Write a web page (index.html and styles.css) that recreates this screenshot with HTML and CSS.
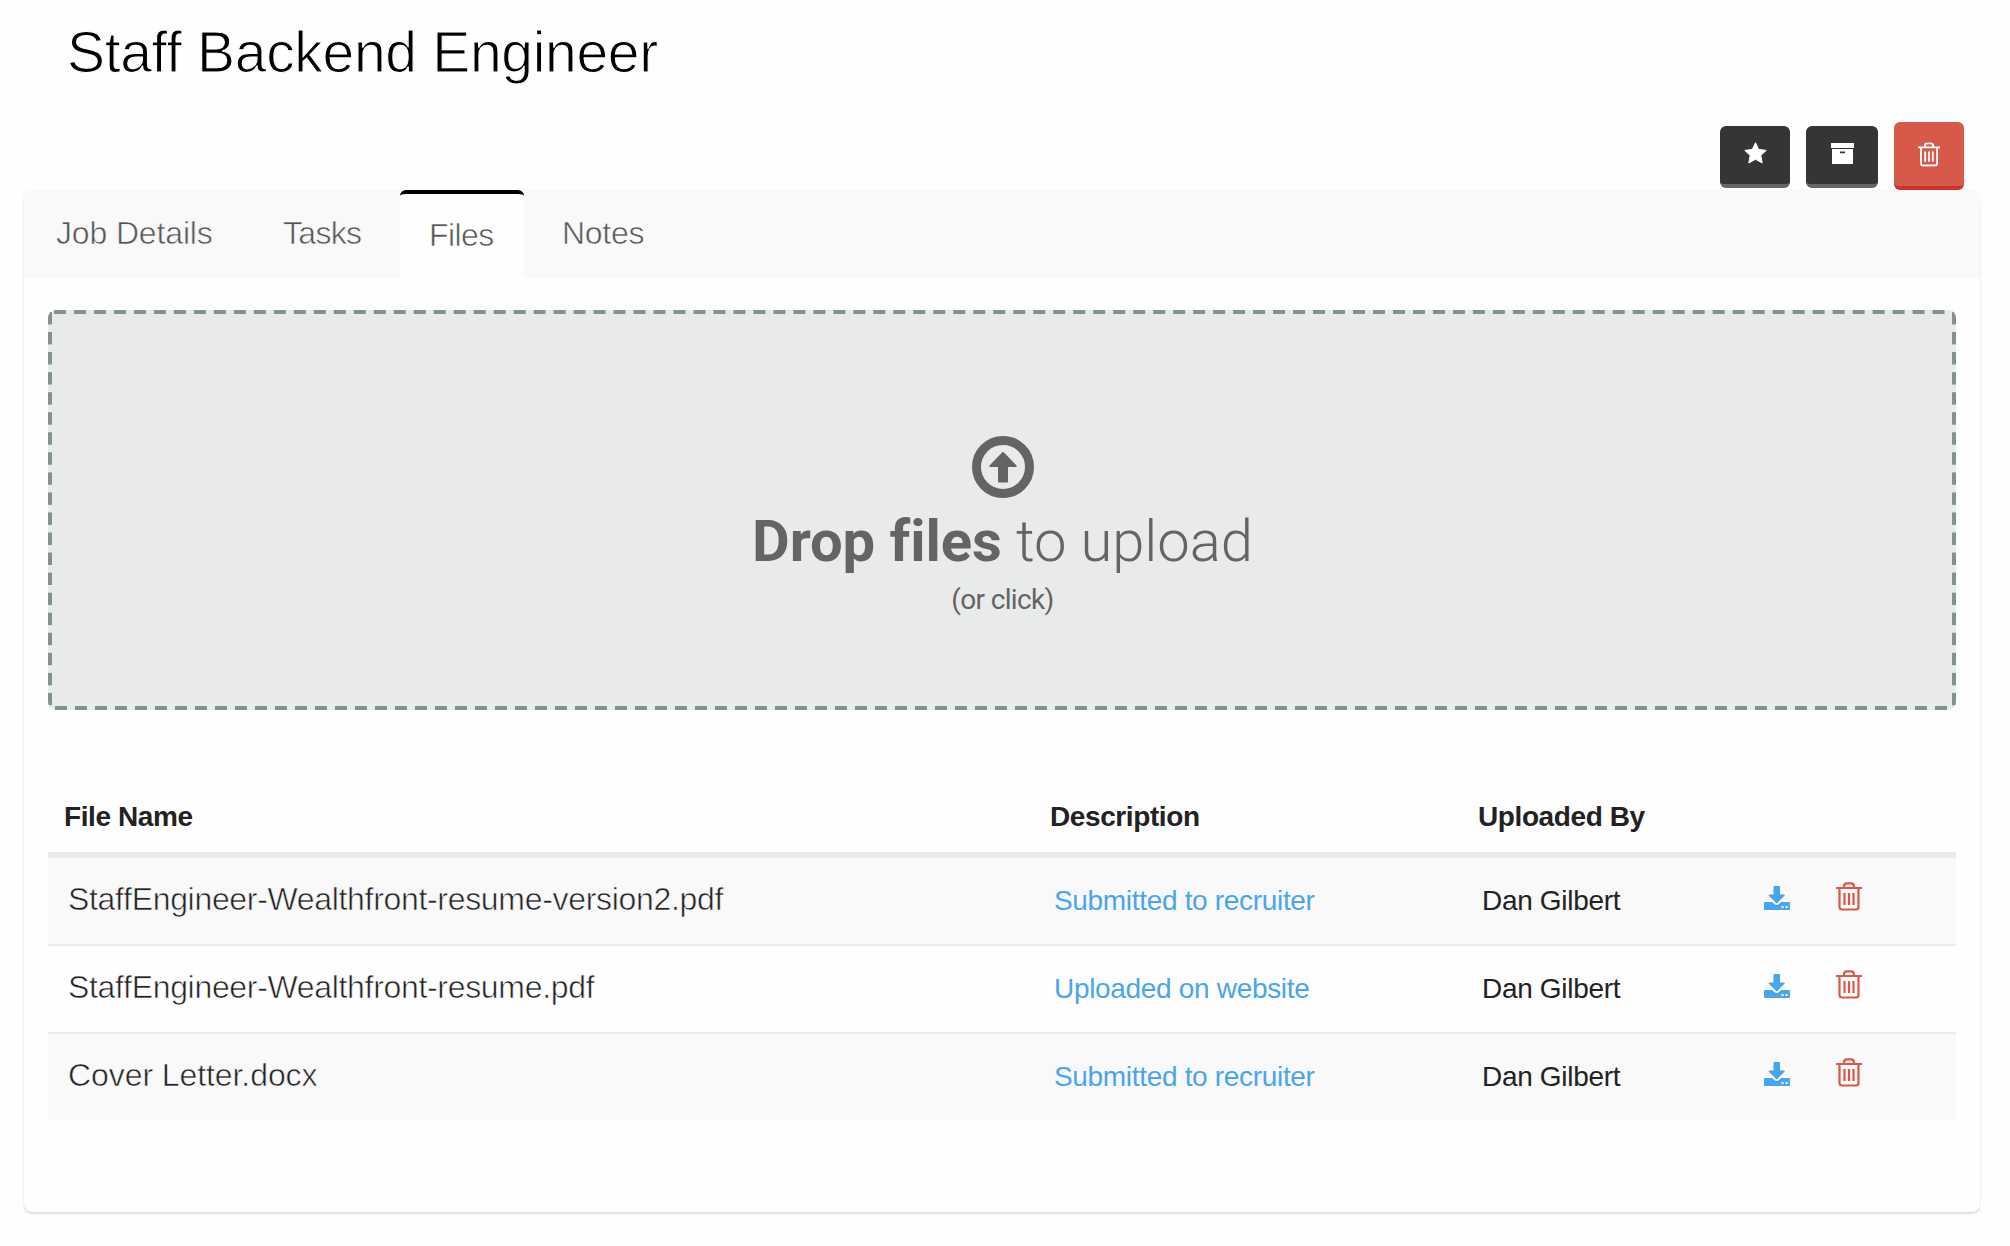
FILE: index.html
```html
<!DOCTYPE html>
<html lang="en">
<head>
<meta charset="utf-8">
<title>Staff Backend Engineer</title>
<link rel="stylesheet" href="styles.css">
</head>
<body>
<svg class="defs" width="0" height="0" aria-hidden="true">
  <symbol id="trash" viewBox="0 0 26 29">
    <g fill="none" stroke="currentColor" stroke-width="2.2">
      <path d="M0 6h26M8 6V4.500Q8 1.300 11 1.300h4Q18 1.300 18 4.500V6M3.500 6v19Q3.500 27.500 6 27.500h14Q22.500 27.500 22.500 25V6"/>
      <path d="M8.500 11v12M13 11v12M17.500 11v12"/>
    </g>
  </symbol>
  <symbol id="download" viewBox="0 0 26 24">
    <path fill="currentColor" fill-rule="evenodd" d="M9.500 1q0-1 1-1h4.500q1 0 1 1v7.500h4q1.300 0 .5 1.200l-7 7q-.8.700-1.600 0l-7-7q-.8-1.200.5-1.200h4.100zM1 16h7.300l2 2q2.400 2.100 4.800 0l2-2H25q1 0 1 1v6q0 1-1 1H1q-1 0-1-1v-6q0-1 1-1zM17.600 20v2h2v-2zM21.600 20v2h2v-2z"/>
  </symbol>
</svg>
<h1 class="title">Staff Backend Engineer</h1>
<div class="actions">
  <button class="btn" aria-label="Favorite"><svg width="23" height="22" viewBox="0 0 23 22"><path fill="#fff" stroke="#fff" stroke-linejoin="round" d="M11.500.7l3.200 6.700 7.500 1-5.400 5 1.400 7.600-6.700-3.700-6.700 3.700 1.400-7.600-5.400-5 7.500-1z"/></svg></button>
  <button class="btn btn-wide" aria-label="Archive"><svg width="23" height="22" viewBox="0 0 23 22"><path fill="#fff" fill-rule="evenodd" d="M0 1h23v5H0zM1 7h21v15H1zM9 9.500v1.700h5v-1.700z"/></svg></button>
  <button class="btn btn-danger" aria-label="Delete"><svg width="22" height="25" viewBox="0 0 26 29"><use href="#trash"/></svg></button>
</div>
<main class="panel">
  <nav class="tabs">
    <a class="tab">Job Details</a>
    <a class="tab tasks">Tasks</a>
    <a class="tab active">Files</a>
    <a class="tab notes">Notes</a>
  </nav>
  <section class="content">
    <div class="dropzone">
      <svg width="62" height="62" viewBox="0 0 62 62"><circle cx="31" cy="31" r="26.500" fill="none" stroke="#646464" stroke-width="9"/><path fill="#646464" d="M30 16.500q1-1 2 0l12.500 13q.8 1.500-.8 1.500H36v14.500q0 1-1 1h-8q-1 0-1-1V31h-7.700q-1.600 0-.8-1.500z"/></svg>
      <div class="drop-title"><strong>Drop files</strong> to upload</div>
      <div class="drop-sub">(or click)</div>
    </div>
    <table class="files">
      <colgroup><col class="c-name"><col class="c-desc"><col class="c-by"><col class="c-dl"><col></colgroup>
      <thead><tr><th>File Name</th><th>Description</th><th>Uploaded By</th><th></th><th></th></tr></thead>
      <tbody>
        <tr><td class="name">StaffEngineer-Wealthfront-resume-version2.pdf</td><td class="desc">Submitted to recruiter</td><td>Dan Gilbert</td><td class="dl"><svg width="26" height="24"><use href="#download"/></svg></td><td class="rm"><svg width="26" height="29"><use href="#trash"/></svg></td></tr>
        <tr><td class="name">StaffEngineer-Wealthfront-resume.pdf</td><td class="desc">Uploaded on website</td><td>Dan Gilbert</td><td class="dl"><svg width="26" height="24"><use href="#download"/></svg></td><td class="rm"><svg width="26" height="29"><use href="#trash"/></svg></td></tr>
        <tr><td class="name short">Cover Letter.docx</td><td class="desc">Submitted to recruiter</td><td>Dan Gilbert</td><td class="dl"><svg width="26" height="24"><use href="#download"/></svg></td><td class="rm"><svg width="26" height="29"><use href="#trash"/></svg></td></tr>
      </tbody>
    </table>
  </section>
</main>
</body>
</html>
```
FILE: styles.css
```css
* { box-sizing: border-box; }
body {
  margin: 0;
  width: 2010px;
  height: 1246px;
  overflow: hidden;
  background: #fefefe;
  color: #222;
  font-family: "Liberation Sans", Arial, sans-serif;
}
.defs { display: block; }
.title {
  margin: 0;
  padding-left: 67px;
  height: 104px;
  line-height: 105px;
  font-size: 57px;
  font-weight: 400;
  letter-spacing: -.32px;
  color: #000;
  -webkit-text-stroke: 1.1px #fefefe;
}
.actions {
  display: flex;
  justify-content: flex-end;
  align-items: flex-end;
  gap: 16px;
  height: 86px;
  padding-right: 46px;
}
.btn {
  display: flex;
  justify-content: center;
  width: 70px;
  height: 62px;
  margin: 0 0 2px;
  padding: 16px 0 0;
  border: 0;
  border-bottom: 4px solid #666;
  border-radius: 6px;
  background: #353533;
  color: #fff;
}
.btn-wide { width: 72px; }
.btn-danger {
  height: 68px;
  margin-bottom: 0;
  padding-top: 20px;
  border-color: #cf312c;
  background: #d7594a;
}
.panel {
  width: 1956px;
  height: 1022px;
  margin-left: 24px;
  background: #fefefe;
  border-radius: 8px;
  box-shadow: 0 2px 2px rgba(0, 0, 0, .12), 0 0 2px rgba(0, 0, 0, .05);
}
.tabs {
  display: grid;
  grid-template-columns: 228px 148px 124px auto;
  height: 88px;
  background: #f9f9f9;
  border-radius: 8px 8px 0 0;
}
.tab {
  padding-left: 32px;
  line-height: 86px;
  font-size: 32px;
  letter-spacing: -.15px;
  color: #555;
  -webkit-text-stroke: .6px #f9f9f9;
}
.tab.tasks { padding-left: 31px; letter-spacing: -.7px; }
.tab.notes { padding-left: 38px; letter-spacing: -.3px; }
.tab.active {
  padding-left: 29px;
  line-height: 82px;
  border-top: 4px solid #000;
  border-radius: 6px 6px 0 0;
  background: #fefefe;
  letter-spacing: -.6px;
  -webkit-text-stroke-color: #fefefe;
}
.content { padding: 32px 24px 0; }
.dropzone {
  --dash: #839190;
  display: flex;
  flex-direction: column;
  align-items: center;
  height: 400px;
  padding: 126px 0 0 1px;
  border-radius: 8px;
  background:
    linear-gradient(90deg, var(--dash) 12px, transparent 12px) 6px 0 / 19.99px 4px repeat-x,
    linear-gradient(90deg, var(--dash) 12px, transparent 12px) 7px 100% / 20px 4px repeat-x,
    linear-gradient(var(--dash) 12px, transparent 12px) 0 2px / 4px 20.05px repeat-y,
    linear-gradient(var(--dash) 12px, transparent 12px) 100% 2px / 4px 20.05px repeat-y,
    #e9ebea;
  color: #646464;
  font-family: Roboto, sans-serif;
}
.dropzone svg { display: block; }
.drop-title {
  height: 84px;
  line-height: 86px;
  font-size: 58px;
  font-weight: 300;
  letter-spacing: -.06px;
  white-space: nowrap;
}
.drop-title strong { font-weight: 700; }
.drop-sub { line-height: 36px; font-size: 28px; letter-spacing: -.65px; }
.files {
  width: 100%;
  margin-top: 71px;
  border-collapse: separate;
  border-spacing: 0;
  table-layout: fixed;
}
.c-name { width: 986px; }
.c-desc { width: 428px; }
.c-by { width: 254px; }
.c-dl { width: 72px; }
th {
  height: 77px;
  padding: 0 0 0 16px;
  border-bottom: 6px solid #e7ebee;
  text-align: left;
  vertical-align: top;
  font-size: 28px;
  line-height: 71px;
  letter-spacing: -.4px;
}
td {
  height: 88px;
  padding: 0 0 0 20px;
  border-bottom: 2px solid #e7ebee;
  vertical-align: top;
  font-size: 28px;
  line-height: 86px;
  letter-spacing: -.32px;
  white-space: nowrap;
}
tr:nth-child(odd) td { background: #f9f9f9; }
tr:last-child td { height: 86px; border-bottom: 0; }
.name {
  font-size: 32px;
  line-height: 82px;
  -webkit-text-stroke: .6px #fefefe;
}
.name.short { letter-spacing: -.08px; }
tr:nth-child(odd) .name { -webkit-text-stroke-color: #f9f9f9; }
.desc { color: #48a5ee; }
.dl { padding: 28px 0 0 48px; color: #48a5ee; }
.rm { padding: 24px 0 0 48px; color: #d7594a; }
td svg { display: block; }
```
